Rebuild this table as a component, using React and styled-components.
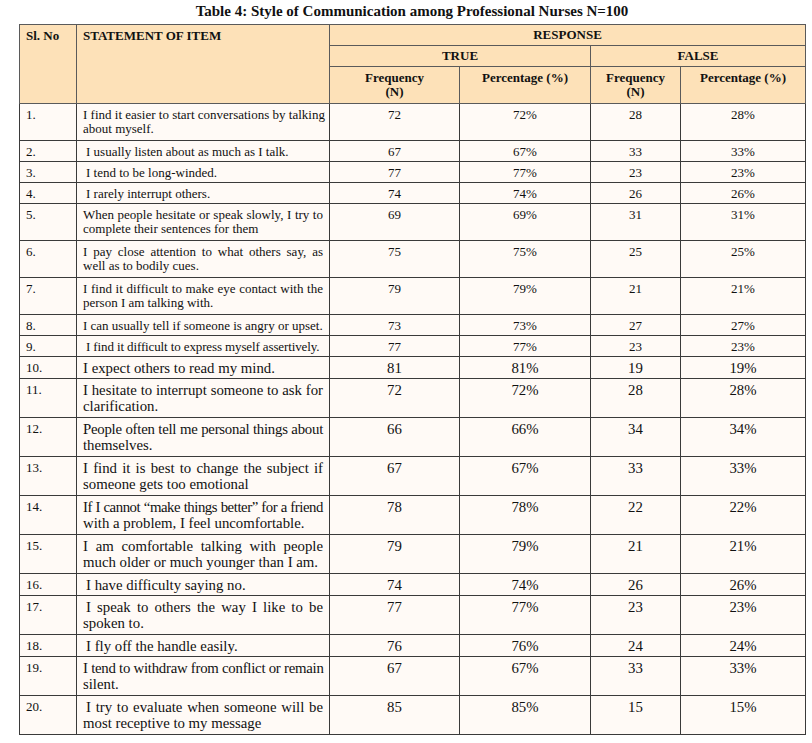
import React from "react";
import styled, { createGlobalStyle } from "styled-components";

const GlobalStyle = createGlobalStyle`
  html, body {
    margin: 0;
    padding: 0;
    background: #ffffff;
  }
  body {
    font-family: "Liberation Serif", "Times New Roman", serif;
    color: #111;
  }
`;

const Page = styled.div`
  width: 812px;
  height: 743px;
  padding: 2px 0 0 19px;
  box-sizing: border-box;
`;

const Title = styled.div`
  width: 786px;
  text-align: center;
  font-weight: bold;
  font-size: 15px;
  line-height: 18px;
  margin-bottom: 4px;
`;

const Table = styled.table`
  width: 786px;
  table-layout: fixed;
  border-collapse: collapse;
  border: 1.5px solid #555;
  font-family: "Liberation Serif", "Times New Roman", serif;
  color: #111;
`;

const HeadCell = styled.th`
  background: #fde1b8;
  border: 1px solid #5a5a5a;
  font-weight: bold;
  font-size: 13px;
  line-height: 14px;
  padding: ${(p) => (p.$mid ? "0 6px" : "4px 6px")};
  height: ${(p) => p.$h || "auto"};
  text-align: ${(p) => (p.$left ? "left" : "center")};
  vertical-align: ${(p) => (p.$mid ? "middle" : "top")};
  white-space: nowrap;
`;

const Cell = styled.td`
  background: #fffaf6;
  border: 1px solid #3a3a3a;
  font-size: ${(p) => (p.$large ? "14.8px" : "13px")};
  line-height: ${(p) => (p.$large ? "16px" : "14px")};
  padding: ${(p) => (p.$large ? "3px" : "4px")} 6px
    ${(p) => (p.$large ? (p.$single ? "2px" : "3px") : p.$single ? "2px" : "4px")};
  vertical-align: top;
  text-align: ${(p) => (p.$center ? "center" : "left")};
`;

const SlCell = styled(Cell)`
  font-size: 13px;
`;

const Line = styled.span`
  display: block;
  white-space: nowrap;
  padding-left: ${(p) => (p.$indent ? "3px" : "0")};
  letter-spacing: ${(p) => p.$tight || "0"};
  text-align: ${(p) => (p.$justify ? "justify" : "left")};
  text-align-last: ${(p) => (p.$justify ? "justify" : "auto")};
`;

const rows = [
  { lines: ["I find it easier to start conversations by talking", "about myself."], t: 72, f: 28 },
  { lines: ["I usually listen about as much as I talk."], indent: true, t: 67, f: 33 },
  { lines: ["I tend to be long-winded."], indent: true, t: 77, f: 23 },
  { lines: ["I rarely interrupt others."], indent: true, t: 74, f: 26 },
  { lines: ["When people hesitate or speak slowly, I try to", "complete their sentences for them"], t: 69, f: 31 },
  { lines: ["I pay close attention to what others say, as", "well as to bodily cues."], t: 75, f: 25 },
  { lines: ["I find it difficult to make eye contact with the", "person I am talking with."], t: 79, f: 21 },
  { lines: ["I can usually tell if someone is angry or upset."], t: 73, f: 27 },
  { lines: ["I find it difficult to express myself assertively."], indent: true, tight: "-0.12px", t: 77, f: 23 },
  { lines: ["I expect others to read my mind."], large: true, t: 81, f: 19 },
  { lines: ["I hesitate to interrupt someone to ask for", "clarification."], large: true, t: 72, f: 28 },
  { lines: ["People often tell me personal things about", "themselves."], large: true, tight: "-0.25px", t: 66, f: 34 },
  { lines: ["I find it is best to change the subject if", "someone gets too emotional"], large: true, t: 67, f: 33 },
  { lines: ["If I cannot \u201cmake things better\u201d for a friend", "with a problem, I feel uncomfortable."], large: true, tight: "-0.45px", t: 78, f: 22 },
  { lines: ["I am comfortable talking with people", "much older or much younger than I am."], large: true, t: 79, f: 21 },
  { lines: ["I have difficulty saying no."], large: true, indent: true, t: 74, f: 26 },
  { lines: ["I speak to others the way I like to be", "spoken to."], large: true, indent: true, t: 77, f: 23 },
  { lines: ["I fly off the handle easily."], large: true, indent: true, t: 76, f: 24 },
  { lines: ["I tend to withdraw from conflict or remain", "silent."], large: true, tight: "-0.25px", t: 67, f: 33 },
  { lines: ["I try to evaluate when someone will be", "most receptive to my message"], large: true, indent: true, t: 85, f: 15 },
];

const Statement = ({ row }) => (
  <>
    {row.lines.map((text, i) => (
      <Line
        key={i}
        $indent={row.indent && i === 0}
        $tight={i === 0 ? row.tight : undefined}
        $justify={row.lines.length > 1 && i === 0}
      >
        {text}
      </Line>
    ))}
  </>
);

const DataRow = ({ row, index }) => {
  const single = row.lines.length === 1;
  const cellProps = { $large: row.large, $single: single };
  return (
    <tr>
      <SlCell {...cellProps}>{index + 1}.</SlCell>
      <Cell {...cellProps}>
        <Statement row={row} />
      </Cell>
      <Cell {...cellProps} $center>{row.t}</Cell>
      <Cell {...cellProps} $center>{row.t}%</Cell>
      <Cell {...cellProps} $center>{row.f}</Cell>
      <Cell {...cellProps} $center>{row.f}%</Cell>
    </tr>
  );
};

export default function App() {
  return (
    <Page>
      <GlobalStyle />
      <Title>Table 4: Style of Communication among Professional Nurses N=100</Title>
      <Table>
        <colgroup>
          <col style={{ width: 57 }} />
          <col style={{ width: 253 }} />
          <col style={{ width: 130 }} />
          <col style={{ width: 131 }} />
          <col style={{ width: 90 }} />
          <col style={{ width: 125 }} />
        </colgroup>
        <thead>
          <tr>
            <HeadCell rowSpan={3} $left>Sl. No</HeadCell>
            <HeadCell rowSpan={3} $left>STATEMENT OF ITEM</HeadCell>
            <HeadCell colSpan={4} $mid $h="20px">RESPONSE</HeadCell>
          </tr>
          <tr>
            <HeadCell colSpan={2} $mid $h="20px">TRUE</HeadCell>
            <HeadCell colSpan={2} $mid $h="20px">FALSE</HeadCell>
          </tr>
          <tr>
            <HeadCell>
              Frequency
              <br />
              (N)
            </HeadCell>
            <HeadCell>Percentage (%)</HeadCell>
            <HeadCell>
              Frequency
              <br />
              (N)
            </HeadCell>
            <HeadCell>Percentage (%)</HeadCell>
          </tr>
        </thead>
        <tbody>
          {rows.map((row, i) => (
            <DataRow key={i} row={row} index={i} />
          ))}
        </tbody>
      </Table>
    </Page>
  );
}
